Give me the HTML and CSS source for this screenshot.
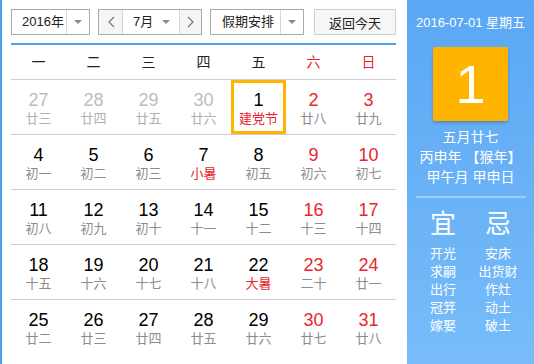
FILE: index.html
```html
<!DOCTYPE html>
<html lang="zh-CN">
<head>
    <meta charset="UTF-8">
    <title>万年历</title>
    <link rel="stylesheet" href="styles.css">
</head>
<body>
    <div class="calendar">
        <div class="main">
            <div class="toolbar">
                <div class="select year-select">
                    <span class="select-text">2016年</span>
                    <span class="select-arrow"><i class="caret"></i></span>
                </div>
                <div class="select month-select">
                    <span class="nav-btn">
                        <svg width="8" height="12" viewBox="0 0 8 12"><polyline points="7,1 2,6 7,11" fill="none" stroke="#777" stroke-width="1.2"/></svg>
                    </span>
                    <span class="month-label">7月<i class="caret"></i></span>
                    <span class="nav-btn next">
                        <svg width="8" height="12" viewBox="0 0 8 12"><polyline points="1,1 6,6 1,11" fill="none" stroke="#777" stroke-width="1.2"/></svg>
                    </span>
                </div>
                <div class="select holiday-select">
                    <span class="select-text">假期安排</span>
                    <span class="select-arrow"><i class="caret"></i></span>
                </div>
                <button class="today-btn">返回今天</button>
            </div>

            <div class="board">
                <div class="weekdays">
                    <span>一</span><span>二</span><span>三</span><span>四</span><span>五</span>
                    <span class="weekend">六</span><span class="weekend">日</span>
                </div>

                <div class="week">
                    <div class="day other"><b>27</b><small>廿三</small></div>
                    <div class="day other"><b>28</b><small>廿四</small></div>
                    <div class="day other"><b>29</b><small>廿五</small></div>
                    <div class="day other"><b>30</b><small>廿六</small></div>
                    <div class="day today"><b>1</b><small class="festival">建党节</small></div>
                    <div class="day weekend"><b>2</b><small>廿八</small></div>
                    <div class="day weekend"><b>3</b><small>廿九</small></div>
                </div>
                <div class="week">
                    <div class="day"><b>4</b><small>初一</small></div>
                    <div class="day"><b>5</b><small>初二</small></div>
                    <div class="day"><b>6</b><small>初三</small></div>
                    <div class="day"><b>7</b><small class="festival">小暑</small></div>
                    <div class="day"><b>8</b><small>初五</small></div>
                    <div class="day weekend"><b>9</b><small>初六</small></div>
                    <div class="day weekend"><b>10</b><small>初七</small></div>
                </div>
                <div class="week">
                    <div class="day"><b>11</b><small>初八</small></div>
                    <div class="day"><b>12</b><small>初九</small></div>
                    <div class="day"><b>13</b><small>初十</small></div>
                    <div class="day"><b>14</b><small>十一</small></div>
                    <div class="day"><b>15</b><small>十二</small></div>
                    <div class="day weekend"><b>16</b><small>十三</small></div>
                    <div class="day weekend"><b>17</b><small>十四</small></div>
                </div>
                <div class="week">
                    <div class="day"><b>18</b><small>十五</small></div>
                    <div class="day"><b>19</b><small>十六</small></div>
                    <div class="day"><b>20</b><small>十七</small></div>
                    <div class="day"><b>21</b><small>十八</small></div>
                    <div class="day"><b>22</b><small class="festival">大暑</small></div>
                    <div class="day weekend"><b>23</b><small>二十</small></div>
                    <div class="day weekend"><b>24</b><small>廿一</small></div>
                </div>
                <div class="week">
                    <div class="day"><b>25</b><small>廿二</small></div>
                    <div class="day"><b>26</b><small>廿三</small></div>
                    <div class="day"><b>27</b><small>廿四</small></div>
                    <div class="day"><b>28</b><small>廿五</small></div>
                    <div class="day"><b>29</b><small>廿六</small></div>
                    <div class="day weekend"><b>30</b><small>廿七</small></div>
                    <div class="day weekend"><b>31</b><small>廿八</small></div>
                </div>
            </div>
        </div>

        <div class="side">
            <div class="side-date">2016-07-01 星期五</div>
            <div class="big-day">1</div>
            <div class="lunar">
                <div>五月廿七</div>
                <div>丙申年 【猴年】</div>
                <div>甲午月 甲申日</div>
            </div>
            <div class="divider"></div>
            <div class="almanac">
                <div class="almanac-col">
                    <div class="almanac-title">宜</div>
                    <div>开光</div>
                    <div>求嗣</div>
                    <div>出行</div>
                    <div>冠笄</div>
                    <div>嫁娶</div>
                </div>
                <div class="almanac-col">
                    <div class="almanac-title">忌</div>
                    <div>安床</div>
                    <div>出货财</div>
                    <div>作灶</div>
                    <div>动土</div>
                    <div>破土</div>
                </div>
            </div>
        </div>
    </div>
</body>
</html>
```

FILE: styles.css
```css
:root {
    --blue: #4d9ff0;
    --red: #e8262d;
    --orange: #ffb500;
    --line: #cfcfcf;
}

* {
    margin: 0;
    padding: 0;
    box-sizing: border-box;
}

body {
    width: 534px;
    height: 364px;
    overflow: hidden;
    background: #fff;
    font-family: "Liberation Sans", "Noto Sans CJK SC", sans-serif;
    color: #000;
}

.calendar {
    display: flex;
    height: 364px;
    border-left: 2px solid var(--blue);
}

.main {
    width: 405px;
    padding: 9px 11px 0 9px;
}

/* toolbar */
.toolbar {
    display: flex;
    height: 26px;
    margin-bottom: 8px;
}

.select {
    display: flex;
    height: 26px;
    border: 1px solid #a9a9a9;
    background: #fff;
    font-size: 13px;
    color: #222;
    line-height: 24px;
}

.select-text {
    flex: 1;
    padding-left: 10px;
}

.select-arrow {
    width: 23px;
    border-left: 1px solid #d8d8d8;
    display: flex;
    align-items: center;
    justify-content: center;
}

.caret {
    display: inline-block;
    width: 0;
    height: 0;
    border-left: 4px solid transparent;
    border-right: 4px solid transparent;
    border-top: 4px solid #8a8a8a;
}

.year-select {
    width: 79px;
}

.month-select {
    width: 104px;
    margin-left: 8px;
    background: #f5f5f5;
}

.nav-btn {
    width: 23px;
    display: flex;
    align-items: center;
    justify-content: center;
}

.nav-btn.next {
    width: 22px;
    border-left: 1px solid #d8d8d8;
}

.month-label {
    flex: 1;
    display: flex;
    align-items: center;
    justify-content: space-between;
    padding: 0 9px 0 10px;
    background: #fff;
    border-left: 1px solid #d8d8d8;
}

.holiday-select {
    width: 94px;
    margin-left: 8px;
}

.holiday-select .select-text {
    padding-left: 11px;
}

.today-btn {
    width: 82px;
    height: 26px;
    margin-left: 10px;
    border: 1px solid #cfcfcf;
    background: #f6f6f6;
    font-family: inherit;
    font-size: 13px;
    color: #222;
}

/* grid */
.board {
    border-top: 2px solid var(--blue);
    width: 385px;
}

.weekdays,
.week {
    display: grid;
    grid-template-columns: repeat(7, 55px);
}

.weekdays {
    height: 35px;
    border-bottom: 1px solid var(--line);
    text-align: center;
    font-size: 14px;
    line-height: 34px;
    color: #222;
}

.weekdays .weekend {
    color: var(--red);
}

.week {
    height: 55px;
    border-bottom: 1px solid var(--line);
}

.week:last-child {
    border-bottom: none;
}

.day {
    display: flex;
    flex-direction: column;
    align-items: center;
    padding-top: 9px;
}

.day b {
    font-weight: normal;
    font-size: 18px;
    line-height: 22px;
}

.day small {
    font-size: 13px;
    line-height: 16px;
    color: #8c8c8c;
}

.day.other b {
    color: #bdbdbd;
}

.day.other small {
    color: #b0b0b0;
}

.day.weekend b {
    color: var(--red);
}

.day small.festival {
    color: var(--red);
}

.day.today {
    box-shadow: inset 0 0 0 3px var(--orange);
}

/* side panel */
.side {
    flex: 1;
    background: linear-gradient(#5aa7f4, #78bcf9);
    color: #fff;
    display: flex;
    flex-direction: column;
    align-items: center;
    padding-top: 13px;
}

.side-date {
    font-size: 13px;
    line-height: 20px;
}

.big-day {
    width: 75px;
    height: 74px;
    margin-top: 14px;
    background: var(--orange);
    border-radius: 2px;
    box-shadow: 0 2px 3px rgba(0, 0, 0, 0.2);
    font-size: 54px;
    line-height: 74px;
    text-align: center;
}

.lunar {
    margin-top: 6px;
    font-size: 14px;
    line-height: 20px;
    text-align: center;
}

.divider {
    width: 110px;
    height: 2px;
    margin-top: 9px;
    background: rgba(255, 255, 255, 0.35);
}

.almanac {
    display: flex;
    width: 110px;
    margin-top: 11px;
}

.almanac-col {
    flex: 1;
    text-align: center;
    font-size: 13px;
    line-height: 18px;
}

.almanac-title {
    font-size: 26px;
    line-height: 30px;
    margin-bottom: 6px;
}
```
